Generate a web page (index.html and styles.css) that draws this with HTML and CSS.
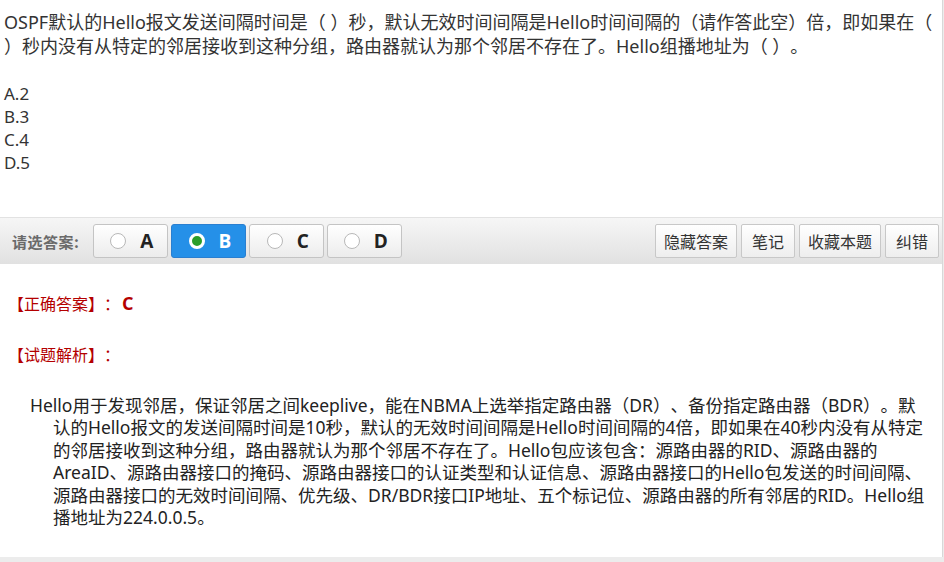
FILE: index.html
```html
<!DOCTYPE html>
<html lang="zh-CN">
	<head>
		<meta charset="utf-8"/>
		<title>试题</title>
		<link rel="stylesheet" href="styles.css">
	</head>
	<body>
		<div class="page">
			<div class="question">
				<p class="stem">OSPF默认的Hello报文发送间隔时间是（ ）秒，默认无效时间间隔是Hello时间间隔的（请作答此空）倍，即如果在（ ）秒内没有从特定的邻居接收到这种分组，路由器就认为那个邻居不存在了。Hello组播地址为（ ）。</p>
				<ul class="options">
					<li>A.2</li>
					<li>B.3</li>
					<li>C.4</li>
					<li>D.5</li>
				</ul>
			</div>
			<div class="toolbar">
				<span class="toolbar-label">请选答案:</span>
				<div class="choices">
					<button class="choice"><span class="radio"></span>A</button>
					<button class="choice selected"><span class="radio"></span>B</button>
					<button class="choice"><span class="radio"></span>C</button>
					<button class="choice"><span class="radio"></span>D</button>
				</div>
				<div class="actions">
					<button class="action">隐藏答案</button>
					<button class="action">笔记</button>
					<button class="action">收藏本题</button>
					<button class="action">纠错</button>
				</div>
			</div>
			<div class="answer">
				<p class="answer-row">【正确答案】：<strong class="answer-key">C</strong></p>
				<p class="answer-row">【试题解析】：</p>
				<p class="analysis">Hello用于发现邻居，保证邻居之间keeplive，能在NBMA上选举指定路由器（DR）、备份指定路由器（BDR）。默认的Hello报文的发送间隔时间是10秒，默认的无效时间间隔是Hello时间间隔的4倍，即如果在40秒内没有从特定的邻居接收到这种分组，路由器就认为那个邻居不存在了。Hello包应该包含：源路由器的RID、源路由器的AreaID、源路由器接口的掩码、源路由器接口的认证类型和认证信息、源路由器接口的Hello包发送的时间间隔、源路由器接口的无效时间间隔、优先级、DR/BDR接口IP地址、五个标记位、源路由器的所有邻居的RID。Hello组播地址为224.0.0.5。</p>
			</div>
		</div>
	</body>
</html>
```

FILE: styles.css
```css
body{
	margin: 0;
	padding: 0;
	background: #ececec;
	font-family: "Noto Sans", "Noto Sans CJK SC", sans-serif;
	color: #333;
	text-spacing-trim: space-all;
}

.page{
	width: 943px;
	height: 557px;
	background: #fff;
	border-right: 1px solid #d8d8d8;
	box-sizing: border-box;
	overflow: hidden;
}

.question{
	padding: 10px 4px 0 4px;
	height: 207px;
}

.stem{
	margin: 0 0 24px;
	font-size: 18px;
	line-height: 24px;
}

.options{
	list-style: none;
	margin: 0;
	padding: 0;
	font-size: 17px;
	line-height: 23px;
}

.toolbar{
	display: flex;
	align-items: center;
	height: 46px;
	border-top: 1px solid #e2e2e2;
	background: linear-gradient(#f6f6f6, #e1e1e1);
	padding: 0 3px 0 12px;
}

.toolbar-label{
	font-family: "Noto Sans CJK SC", sans-serif;
	font-size: 15px;
	font-weight: bold;
	color: #6a6a6a;
	margin-right: 14px;
	letter-spacing: 0.5px;
}

.choices{
	display: flex;
	gap: 3px;
}

.choice{
	display: flex;
	align-items: center;
	justify-content: center;
	gap: 14px;
	width: 75px;
	height: 34px;
	padding: 0 0 0 2px;
	border: 1px solid #c4c4c4;
	border-radius: 3px;
	background: linear-gradient(#fff, #ececec);
	font-family: "Open Sans", "Noto Sans CJK SC", sans-serif;
	font-size: 19px;
	font-weight: bold;
	color: #222;
	cursor: pointer;
}

.radio{
	width: 16px;
	height: 16px;
	border: 1px solid #b8b8b8;
	border-radius: 50%;
	background: #fff;
	box-sizing: border-box;
}

.choice.selected{
	background: #2590e8;
	border-color: #2a7fd0;
	color: #fff;
}

.choice.selected .radio{
	border: 3px solid #fff;
	background: #2a9d2a;
}

.actions{
	display: flex;
	gap: 4px;
	margin-left: auto;
}

.action{
	min-width: 54px;
	height: 34px;
	padding: 0 8px;
	border: 1px solid #c8c8c8;
	border-radius: 2px;
	background: linear-gradient(#fff, #eeeeee);
	font-family: "Noto Sans CJK SC", sans-serif;
	font-size: 16px;
	color: #333;
	cursor: pointer;
}

.answer{
	padding: 28px 10px 0 8px;
}

.answer-row{
	margin: 0 0 29px;
	font-family: "Noto Sans CJK SC", sans-serif;
	font-size: 16px;
	line-height: 22px;
	color: #b40000;
}

.answer-key{
	font-family: "Open Sans", sans-serif;
	font-size: 18px;
	margin-left: 2px;
}

.analysis{
	margin: 0;
	padding: 0 0 0 45px;
	text-indent: -23px;
	font-size: 17.5px;
	line-height: 22.4px;
	color: #222;
}
```
